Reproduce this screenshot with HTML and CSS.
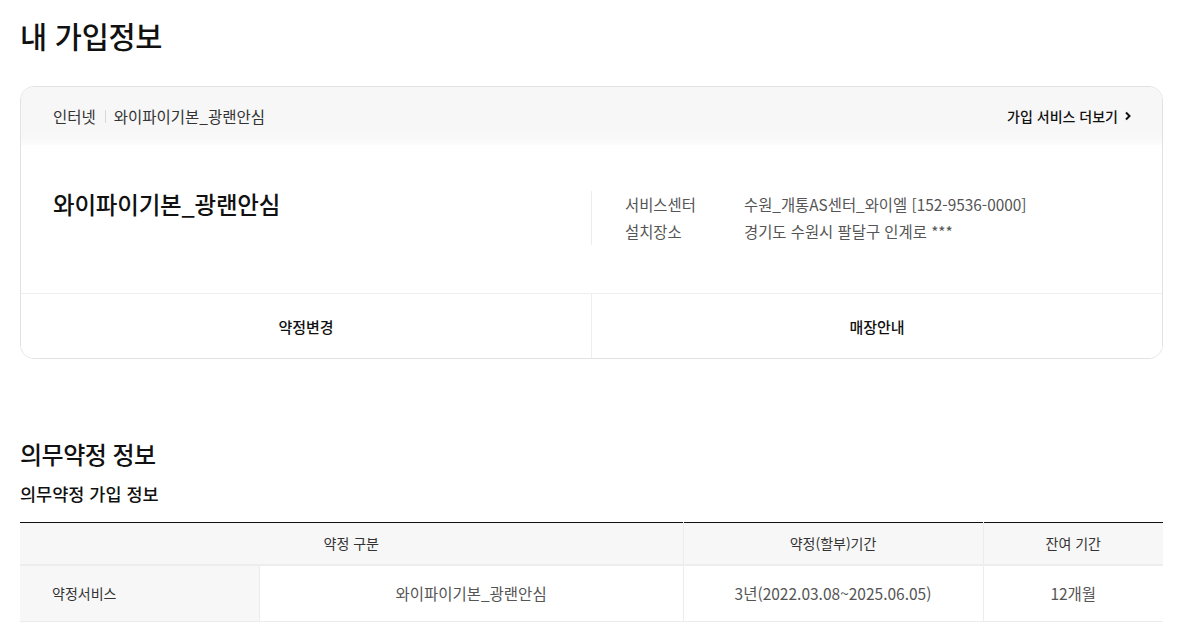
FILE: index.html
```html
<!DOCTYPE html>
<html lang="ko">
<head>
<meta charset="utf-8">
<title>내 가입정보</title>
<link rel="stylesheet" href="styles.css">
</head>
<body>
<main class="page">
  <h1 class="page-title">내 가입정보</h1>

  <section class="card">
    <div class="card-head">
      <div class="crumbs">
        <span class="crumb">인터넷</span>
        <span class="crumb-sep"></span>
        <span class="crumb">와이파이기본_광랜안심</span>
      </div>
      <a class="more-link" href="#">가입 서비스 더보기
        <svg class="chev" width="8" height="10" viewBox="0 0 8 10"><polyline points="2,1.5 5.5,5 2,8.5" fill="none" stroke="#111" stroke-width="2"/></svg>
      </a>
    </div>
    <div class="card-body">
      <div class="prod-name">와이파이기본_광랜안심</div>
      <dl class="info">
        <div class="info-row"><dt>서비스센터</dt><dd>수원_개통AS센터_와이엘 [152-9536-0000]</dd></div>
        <div class="info-row"><dt>설치장소</dt><dd>경기도 수원시 팔달구 인계로 ***</dd></div>
      </dl>
    </div>
    <div class="card-actions">
      <button class="action">약정변경</button>
      <button class="action">매장안내</button>
    </div>
  </section>

  <h2 class="section-title">의무약정 정보</h2>
  <h3 class="sub-title">의무약정 가입 정보</h3>

  <table class="contract">
    <colgroup>
      <col class="c1"><col class="c2"><col class="c3"><col class="c4">
    </colgroup>
    <thead>
      <tr>
        <th colspan="2">약정 구분</th>
        <th>약정(할부)기간</th>
        <th>잔여 기간</th>
      </tr>
    </thead>
    <tbody>
      <tr>
        <th class="row-head">약정서비스</th>
        <td>와이파이기본_광랜안심</td>
        <td>3년(2022.03.08~2025.06.05)</td>
        <td>12개월</td>
      </tr>
    </tbody>
  </table>
</main>
</body>
</html>
```

FILE: styles.css
```css
* { box-sizing: border-box; }
html, body { margin: 0; padding: 0; background: #fff; }
body {
  font-family: "Noto Sans CJK KR", "Noto Sans", sans-serif;
  color: #111;
}
.page {
  width: 1143px;
  margin-left: 20px;
  padding-top: 15px;
}
.page-title {
  margin: 0;
  font-size: 29.5px;
  line-height: 40px;
  font-weight: 500;
  color: #111;
  letter-spacing: -0.3px;
}
.card {
  margin-top: 31px;
  border: 1px solid #e2e2e2;
  border-radius: 14px;
  overflow: hidden;
}
.card-head {
  height: 58px;
  background: linear-gradient(#f7f7f7 80%, #fbfbfb);
  display: flex;
  align-items: center;
  justify-content: space-between;
  padding: 0 30px 0 32px;
}
.crumbs {
  display: flex;
  align-items: center;
  font-size: 15.5px;
  color: #333;
}
.crumb-sep {
  width: 1px;
  height: 13px;
  background: #d8d8d8;
  margin: 0 8px 0 9px;
}
.more-link {
  display: flex;
  align-items: center;
  gap: 6px;
  font-size: 14px;
  font-weight: 500;
  color: #111;
  text-decoration: none;
}
.card-body {
  display: grid;
  grid-template-columns: 570px 1fr;
  height: 148px;
  padding-top: 46px;
}
.prod-name {
  padding-left: 32px;
  font-size: 23.5px;
  line-height: 26px;
  font-weight: 500;
  color: #111;
  letter-spacing: -0.2px;
}
.info {
  margin: 0;
  align-self: start;
  border-left: 1px solid #ececec;
  padding-left: 33px;
}
.info-row {
  display: flex;
  font-size: 15.4px;
  line-height: 27px;
  color: #555;
}
.info-row dt { width: 119px; }
.info-row dd { margin: 0; }
.card-actions {
  display: grid;
  grid-template-columns: 570px 1fr;
  border-top: 1px solid #eeeeee;
}
.action {
  height: 64px;
  border: 0;
  background: #fff;
  font-family: inherit;
  font-size: 15px;
  font-weight: 500;
  color: #111;
  cursor: pointer;
}
.action + .action { border-left: 1px solid #eeeeee; }

.section-title {
  margin: 79px 0 0;
  font-size: 24px;
  line-height: 32px;
  font-weight: 500;
  color: #111;
  letter-spacing: -0.5px;
}
.sub-title {
  margin: 11px 0 0;
  font-size: 17.5px;
  line-height: 26px;
  font-weight: 500;
  color: #111;
}
.contract {
  margin-top: 15px;
  width: 100%;
  border-collapse: collapse;
  border-top: 1px solid #111;
  font-size: 14px;
  table-layout: fixed;
}
.contract col.c1 { width: 239px; }
.contract col.c2 { width: 424px; }
.contract col.c3 { width: 300px; }
.contract col.c4 { width: 180px; }
.contract thead th {
  height: 42px;
  background: #f7f7f7;
  font-weight: 400;
  color: #333;
  border-bottom: 2px solid #ededed;
  border-left: 1px solid #ececec;
}
.contract thead th:first-child { border-left: 0; }
.contract tbody th, .contract tbody td {
  height: 57px;
  border-bottom: 1px solid #ececec;
  border-left: 1px solid #ececec;
  text-align: center;
  font-size: 15.5px;
  color: #555;
  font-weight: 400;
}
.contract tbody .row-head {
  background: #f7f7f7;
  border-left: 0;
  text-align: left;
  padding-left: 32px;
  font-size: 14px;
  color: #333;
}
```
